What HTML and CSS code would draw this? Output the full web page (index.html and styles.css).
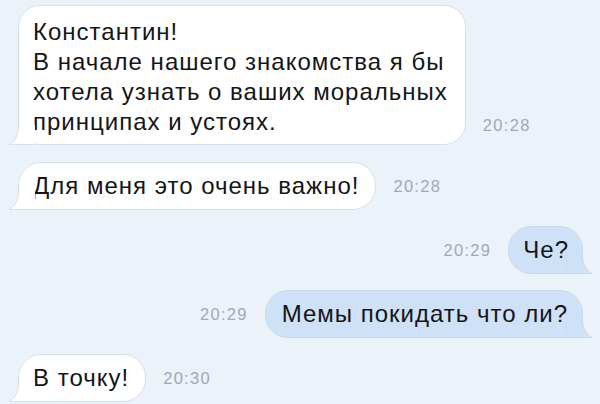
FILE: index.html
```html
<!DOCTYPE html>
<html lang="ru">
<head>
<meta charset="utf-8">
<link rel="stylesheet" href="styles.css">
</head>
<body>
<div class="chat">
  <div class="row in first">
    <div class="bubble in-bubble big">
      Константин!<br>В начале нашего знакомства я бы<br>хотела узнать о ваших моральных<br>принципах и устоях.
      <svg class="tail tail-in" viewBox="0 0 26 20" width="26" height="20"><path class="fill" d="M9.5 0 C9.5 10 7 15 0.5 19.5 C4 19.8 8 19.5 12 19.5 L26 19.5 L26 0 Z"/><path class="edge" d="M9.5 0 C9.5 10 7 15 0.5 19.5 C4 19.8 8 19.5 12 19.5 L26 19.5"/></svg>
    </div>
    <span class="time">20:28</span>
  </div>
  <div class="row in">
    <div class="bubble in-bubble">
      Для меня это очень важно!
      <svg class="tail tail-in" viewBox="0 0 26 20" width="26" height="20"><path class="fill" d="M9.5 0 C9.5 10 7 15 0.5 19.5 C4 19.8 8 19.5 12 19.5 L26 19.5 L26 0 Z"/><path class="edge" d="M9.5 0 C9.5 10 7 15 0.5 19.5 C4 19.8 8 19.5 12 19.5 L26 19.5"/></svg>
    </div>
    <span class="time">20:28</span>
  </div>
  <div class="row out">
    <span class="time">20:29</span>
    <div class="bubble out-bubble short">
      Че?
      <svg class="tail tail-out" viewBox="0 0 26 20" width="26" height="20"><path class="fill-out" d="M9.5 0 C9.5 10 7 15 0.5 19.5 C4 19.8 8 19.5 12 19.5 L26 19.5 L26 0 Z"/></svg>
    </div>
  </div>
  <div class="row out">
    <span class="time">20:29</span>
    <div class="bubble out-bubble">
      Мемы покидать что ли?
      <svg class="tail tail-out" viewBox="0 0 26 20" width="26" height="20"><path class="fill-out" d="M9.5 0 C9.5 10 7 15 0.5 19.5 C4 19.8 8 19.5 12 19.5 L26 19.5 L26 0 Z"/></svg>
    </div>
  </div>
  <div class="row in">
    <div class="bubble in-bubble">
      В точку!
      <svg class="tail tail-in" viewBox="0 0 26 20" width="26" height="20"><path class="fill" d="M9.5 0 C9.5 10 7 15 0.5 19.5 C4 19.8 8 19.5 12 19.5 L26 19.5 L26 0 Z"/><path class="edge" d="M9.5 0 C9.5 10 7 15 0.5 19.5 C4 19.8 8 19.5 12 19.5 L26 19.5"/></svg>
    </div>
    <span class="time">20:30</span>
  </div>
</div>
</body>
</html>
```
FILE: styles.css
```css
html, body {
  margin: 0;
  padding: 0;
  background: #ecf2f9;
}
body {
  width: 600px;
  height: 404px;
  overflow: hidden;
  font-family: "Liberation Sans", Arial, sans-serif;
  color: #141517;
}
.chat {
  display: flex;
  flex-direction: column;
  gap: 16px;
  padding: 5px 17px 0 18px;
}
.chat .first {
  margin-bottom: 1px;
}
.row {
  display: flex;
  align-items: flex-end;
  gap: 17px;
}
.row.out {
  justify-content: flex-end;
}
.bubble {
  position: relative;
  font-size: 24px;
  letter-spacing: 1px;
  line-height: 30px;
  padding: 8px 16px 8px 14px;
  border-radius: 23px;
  white-space: nowrap;
}
.bubble.big {
  padding: 11px 17px 7px 14px;
  border-radius: 22px;
}
.in-bubble {
  background: #ffffff;
  border: 1px solid #d9dfe7;
  border-bottom-left-radius: 4px;
}
.out-bubble {
  background: #cfe1f6;
  border: 1px solid #c8d9ee;
  border-bottom-right-radius: 4px;
  padding-left: 16px;
  padding-right: 14px;
}
.out-bubble.short {
  padding-left: 14px;
  padding-right: 13px;
}
.tail {
  position: absolute;
  bottom: -1px;
  display: block;
}
.tail-in {
  left: -10px;
}
.tail-out {
  right: -10px;
  transform: scaleX(-1);
}
.fill {
  fill: #ffffff;
}
.edge {
  fill: none;
  stroke: #d9dfe7;
  stroke-width: 1;
}
.fill-out {
  fill: #cfe1f6;
  stroke: #c8d9ee;
  stroke-width: 1;
}
.time {
  font-size: 16.5px;
  letter-spacing: 1.3px;
  color: #a1a9b4;
  line-height: 18px;
  margin-bottom: 15px;
}
.first .time {
  margin-bottom: 11px;
}
```
